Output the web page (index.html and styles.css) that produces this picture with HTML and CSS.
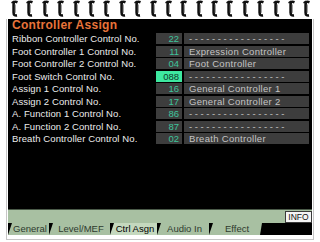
FILE: index.html
```html
<!DOCTYPE html>
<html>
  <head>
    <meta charset="utf-8">
    <link rel="stylesheet" href="styles.css">
    <title>Controller Assign</title>
  </head>
  <body>
    <!--Spiral binding-->
    <div class="spiral">
      <svg class="ring" viewBox="0 0 7 17"><path d="M6.5 2.2 Q2.6 0.6 2.6 4.5 L2.6 12.5 Q2.6 16 6 15.4" fill="none" stroke="#111" stroke-width="2.6"/><path d="M0.6 3 L3 1.2" stroke="#111" stroke-width="1.6"/><path d="M4.4 4.5 L4.4 12.8" stroke="#8a8a8a" stroke-width="0.9"/></svg>
      <svg class="ring" viewBox="0 0 7 17"><path d="M6.5 2.2 Q2.6 0.6 2.6 4.5 L2.6 12.5 Q2.6 16 6 15.4" fill="none" stroke="#111" stroke-width="2.6"/><path d="M0.6 3 L3 1.2" stroke="#111" stroke-width="1.6"/><path d="M4.4 4.5 L4.4 12.8" stroke="#8a8a8a" stroke-width="0.9"/></svg>
      <svg class="ring" viewBox="0 0 7 17"><path d="M6.5 2.2 Q2.6 0.6 2.6 4.5 L2.6 12.5 Q2.6 16 6 15.4" fill="none" stroke="#111" stroke-width="2.6"/><path d="M0.6 3 L3 1.2" stroke="#111" stroke-width="1.6"/><path d="M4.4 4.5 L4.4 12.8" stroke="#8a8a8a" stroke-width="0.9"/></svg>
      <svg class="ring" viewBox="0 0 7 17"><path d="M6.5 2.2 Q2.6 0.6 2.6 4.5 L2.6 12.5 Q2.6 16 6 15.4" fill="none" stroke="#111" stroke-width="2.6"/><path d="M0.6 3 L3 1.2" stroke="#111" stroke-width="1.6"/><path d="M4.4 4.5 L4.4 12.8" stroke="#8a8a8a" stroke-width="0.9"/></svg>
      <svg class="ring" viewBox="0 0 7 17"><path d="M6.5 2.2 Q2.6 0.6 2.6 4.5 L2.6 12.5 Q2.6 16 6 15.4" fill="none" stroke="#111" stroke-width="2.6"/><path d="M0.6 3 L3 1.2" stroke="#111" stroke-width="1.6"/><path d="M4.4 4.5 L4.4 12.8" stroke="#8a8a8a" stroke-width="0.9"/></svg>
      <svg class="ring" viewBox="0 0 7 17"><path d="M6.5 2.2 Q2.6 0.6 2.6 4.5 L2.6 12.5 Q2.6 16 6 15.4" fill="none" stroke="#111" stroke-width="2.6"/><path d="M0.6 3 L3 1.2" stroke="#111" stroke-width="1.6"/><path d="M4.4 4.5 L4.4 12.8" stroke="#8a8a8a" stroke-width="0.9"/></svg>
      <svg class="ring" viewBox="0 0 7 17"><path d="M6.5 2.2 Q2.6 0.6 2.6 4.5 L2.6 12.5 Q2.6 16 6 15.4" fill="none" stroke="#111" stroke-width="2.6"/><path d="M0.6 3 L3 1.2" stroke="#111" stroke-width="1.6"/><path d="M4.4 4.5 L4.4 12.8" stroke="#8a8a8a" stroke-width="0.9"/></svg>
      <svg class="ring" viewBox="0 0 7 17"><path d="M6.5 2.2 Q2.6 0.6 2.6 4.5 L2.6 12.5 Q2.6 16 6 15.4" fill="none" stroke="#111" stroke-width="2.6"/><path d="M0.6 3 L3 1.2" stroke="#111" stroke-width="1.6"/><path d="M4.4 4.5 L4.4 12.8" stroke="#8a8a8a" stroke-width="0.9"/></svg>
      <svg class="ring" viewBox="0 0 7 17"><path d="M6.5 2.2 Q2.6 0.6 2.6 4.5 L2.6 12.5 Q2.6 16 6 15.4" fill="none" stroke="#111" stroke-width="2.6"/><path d="M0.6 3 L3 1.2" stroke="#111" stroke-width="1.6"/><path d="M4.4 4.5 L4.4 12.8" stroke="#8a8a8a" stroke-width="0.9"/></svg>
      <svg class="ring" viewBox="0 0 7 17"><path d="M6.5 2.2 Q2.6 0.6 2.6 4.5 L2.6 12.5 Q2.6 16 6 15.4" fill="none" stroke="#111" stroke-width="2.6"/><path d="M0.6 3 L3 1.2" stroke="#111" stroke-width="1.6"/><path d="M4.4 4.5 L4.4 12.8" stroke="#8a8a8a" stroke-width="0.9"/></svg>
      <svg class="ring" viewBox="0 0 7 17"><path d="M6.5 2.2 Q2.6 0.6 2.6 4.5 L2.6 12.5 Q2.6 16 6 15.4" fill="none" stroke="#111" stroke-width="2.6"/><path d="M0.6 3 L3 1.2" stroke="#111" stroke-width="1.6"/><path d="M4.4 4.5 L4.4 12.8" stroke="#8a8a8a" stroke-width="0.9"/></svg>
      <svg class="ring" viewBox="0 0 7 17"><path d="M6.5 2.2 Q2.6 0.6 2.6 4.5 L2.6 12.5 Q2.6 16 6 15.4" fill="none" stroke="#111" stroke-width="2.6"/><path d="M0.6 3 L3 1.2" stroke="#111" stroke-width="1.6"/><path d="M4.4 4.5 L4.4 12.8" stroke="#8a8a8a" stroke-width="0.9"/></svg>
      <svg class="ring" viewBox="0 0 7 17"><path d="M6.5 2.2 Q2.6 0.6 2.6 4.5 L2.6 12.5 Q2.6 16 6 15.4" fill="none" stroke="#111" stroke-width="2.6"/><path d="M0.6 3 L3 1.2" stroke="#111" stroke-width="1.6"/><path d="M4.4 4.5 L4.4 12.8" stroke="#8a8a8a" stroke-width="0.9"/></svg>
      <svg class="ring" viewBox="0 0 7 17"><path d="M6.5 2.2 Q2.6 0.6 2.6 4.5 L2.6 12.5 Q2.6 16 6 15.4" fill="none" stroke="#111" stroke-width="2.6"/><path d="M0.6 3 L3 1.2" stroke="#111" stroke-width="1.6"/><path d="M4.4 4.5 L4.4 12.8" stroke="#8a8a8a" stroke-width="0.9"/></svg>
      <svg class="ring" viewBox="0 0 7 17"><path d="M6.5 2.2 Q2.6 0.6 2.6 4.5 L2.6 12.5 Q2.6 16 6 15.4" fill="none" stroke="#111" stroke-width="2.6"/><path d="M0.6 3 L3 1.2" stroke="#111" stroke-width="1.6"/><path d="M4.4 4.5 L4.4 12.8" stroke="#8a8a8a" stroke-width="0.9"/></svg>
      <svg class="ring" viewBox="0 0 7 17"><path d="M6.5 2.2 Q2.6 0.6 2.6 4.5 L2.6 12.5 Q2.6 16 6 15.4" fill="none" stroke="#111" stroke-width="2.6"/><path d="M0.6 3 L3 1.2" stroke="#111" stroke-width="1.6"/><path d="M4.4 4.5 L4.4 12.8" stroke="#8a8a8a" stroke-width="0.9"/></svg>
      <svg class="ring" viewBox="0 0 7 17"><path d="M6.5 2.2 Q2.6 0.6 2.6 4.5 L2.6 12.5 Q2.6 16 6 15.4" fill="none" stroke="#111" stroke-width="2.6"/><path d="M0.6 3 L3 1.2" stroke="#111" stroke-width="1.6"/><path d="M4.4 4.5 L4.4 12.8" stroke="#8a8a8a" stroke-width="0.9"/></svg>
      <svg class="ring" viewBox="0 0 7 17"><path d="M6.5 2.2 Q2.6 0.6 2.6 4.5 L2.6 12.5 Q2.6 16 6 15.4" fill="none" stroke="#111" stroke-width="2.6"/><path d="M0.6 3 L3 1.2" stroke="#111" stroke-width="1.6"/><path d="M4.4 4.5 L4.4 12.8" stroke="#8a8a8a" stroke-width="0.9"/></svg>
      <svg class="ring" viewBox="0 0 7 17"><path d="M6.5 2.2 Q2.6 0.6 2.6 4.5 L2.6 12.5 Q2.6 16 6 15.4" fill="none" stroke="#111" stroke-width="2.6"/><path d="M0.6 3 L3 1.2" stroke="#111" stroke-width="1.6"/><path d="M4.4 4.5 L4.4 12.8" stroke="#8a8a8a" stroke-width="0.9"/></svg>
      <svg class="ring" viewBox="0 0 7 17"><path d="M6.5 2.2 Q2.6 0.6 2.6 4.5 L2.6 12.5 Q2.6 16 6 15.4" fill="none" stroke="#111" stroke-width="2.6"/><path d="M0.6 3 L3 1.2" stroke="#111" stroke-width="1.6"/><path d="M4.4 4.5 L4.4 12.8" stroke="#8a8a8a" stroke-width="0.9"/></svg>
    </div>

    <div class="sheet">
      <!--Display panel-->
      <div class="panel">
        <div class="title">Controller Assign</div>
        <div class="rows">
          <div class="label">Ribbon Controller Control No.</div>
          <div class="num">22</div>
          <div class="name dash">-----------------</div>

          <div class="label">Foot Controller 1 Control No.</div>
          <div class="num">11</div>
          <div class="name">Expression Controller</div>

          <div class="label">Foot Controller 2 Control No.</div>
          <div class="num">04</div>
          <div class="name">Foot Controller</div>

          <div class="label">Foot Switch Control No.</div>
          <div class="num selected">088</div>
          <div class="name dash">-----------------</div>

          <div class="label">Assign 1 Control No.</div>
          <div class="num">16</div>
          <div class="name">General Controller 1</div>

          <div class="label">Assign 2 Control No.</div>
          <div class="num">17</div>
          <div class="name">General Controller 2</div>

          <div class="label">A. Function 1 Control No.</div>
          <div class="num">86</div>
          <div class="name dash">-----------------</div>

          <div class="label">A. Function 2 Control No.</div>
          <div class="num">87</div>
          <div class="name dash">-----------------</div>

          <div class="label">Breath Controller Control No.</div>
          <div class="num">02</div>
          <div class="name">Breath Controller</div>
        </div>
      </div>

      <!--Info bar-->
      <div class="infobar">
        <div class="info">INFO</div>
      </div>

      <!--Tabs-->
      <div class="tabs">
        <div class="tab tab-general">General</div>
        <div class="tab tab-level">Level/MEF</div>
        <div class="tab tab-ctrl active">Ctrl Asgn</div>
        <div class="tab tab-audio">Audio In</div>
        <div class="tab tab-effect">Effect</div>
      </div>
    </div>
  </body>
</html>
```

FILE: styles.css
```css
body {
  margin: 0;
  width: 320px;
  height: 242px;
  overflow: hidden;
  background-color: white;
  font-family: "Liberation Sans", Arial, sans-serif;
}

.spiral {
  display: flex;
  gap: 8.4px;
  height: 19px;
  padding-left: 11px;
}

.ring {
  width: 7px;
  height: 17px;
  flex: none;
}

.sheet {
  margin: 0 6px 2px 6px;
  padding: 0 1px 4px 1px;
  border-left: 1px solid #c6c6c6;
  border-right: 1px solid #c6c6c6;
  border-bottom: 1px solid #c6c6c6;
}

.panel {
  height: 190px;
  background-color: black;
  padding: 1px 4px 0 4px;
  box-sizing: border-box;
}

.title {
  color: #e8743a;
  font-size: 12px;
  font-weight: bold;
  line-height: 11px;
  height: 12px;
  letter-spacing: 0.3px;
}

.rows {
  display: grid;
  grid-template-columns: 142px 26px 125px;
  column-gap: 2px;
  grid-auto-rows: 11px;
  row-gap: 1.5px;
  margin-top: 1px;
  font-size: 9.5px;
  line-height: 11px;
}

.label {
  color: #ececec;
  letter-spacing: 0.1px;
}

.num {
  background-color: #3d3d3d;
  color: #3ec49c;
  text-align: right;
  padding-right: 3px;
}

.num.selected {
  background-color: #3ee8a0;
  color: #0f3a2a;
}

.name {
  background-color: #3d3d3d;
  color: #c4c4c4;
  padding-left: 5px;
  letter-spacing: 0.3px;
}

.name.dash {
  letter-spacing: 2.6px;
}

.infobar {
  height: 13px;
  border-top: 1px solid #4a5a48;
  background-color: #a8c0a2;
  display: flex;
  justify-content: flex-end;
  align-items: center;
}

.info {
  width: 27px;
  height: 12px;
  box-sizing: border-box;
  border: 1px solid #3a3a3a;
  background-color: #f4f4f4;
  color: #111;
  font-size: 8.5px;
  line-height: 10px;
  text-align: center;
}

.tabs {
  display: flex;
  height: 12px;
  background-color: black;
}

.tab {
  background-color: #a8c0a2;
  color: #2e3a2e;
  font-size: 9.5px;
  line-height: 12px;
  text-align: center;
  padding-left: 3px;
  box-sizing: border-box;
  clip-path: polygon(4px 0, 100% 0, 100% 100%, 0 100%);
}

.tab-general { width: 41px; }
.tab-level { width: 61px; }
.tab-ctrl { width: 47px; }
.tab-audio { width: 52px; }

.tab-effect {
  width: 53px;
  clip-path: polygon(4px 0, 100% 0, calc(100% - 2px) 100%, 0 100%);
}

.tab.active {
  background-color: #c4d8be;
  color: black;
}
```
